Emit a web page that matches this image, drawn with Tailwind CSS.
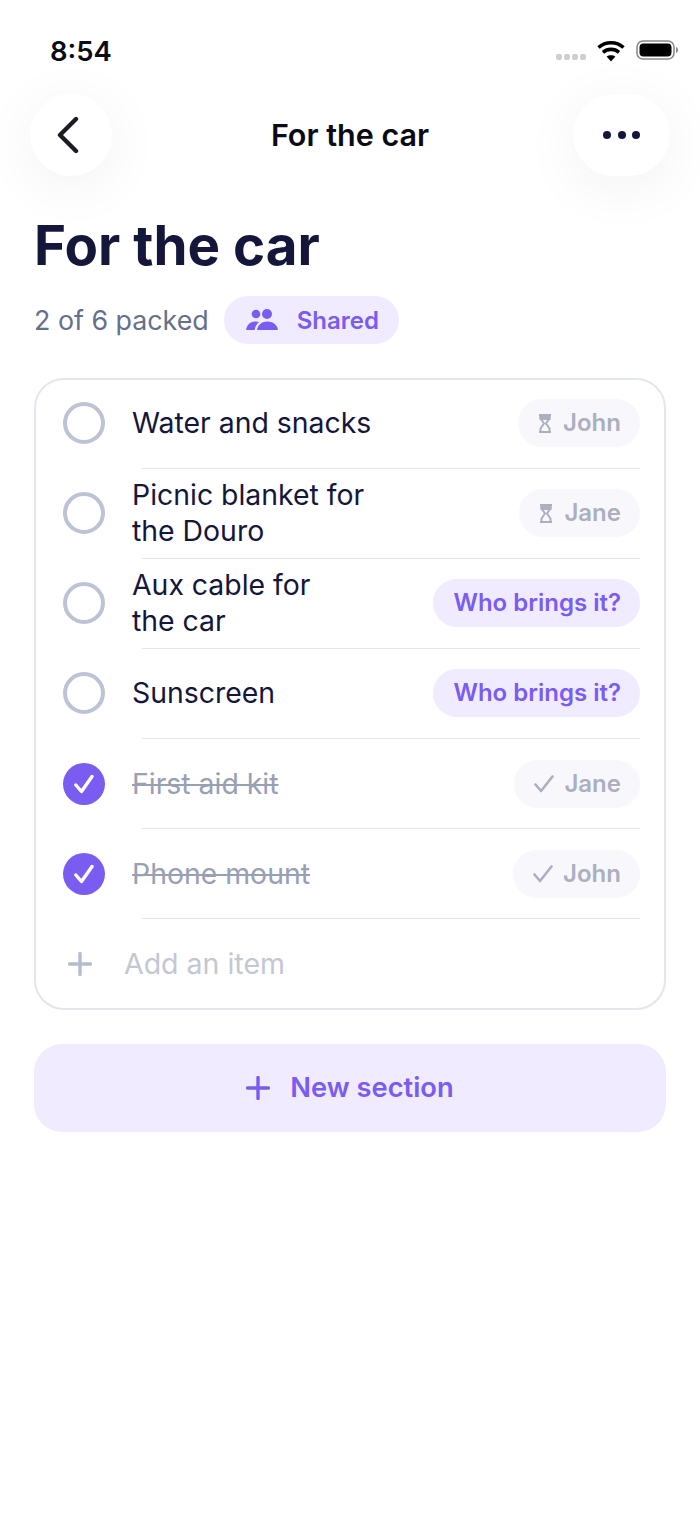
<!DOCTYPE html>
<html lang="en">
<head>
<meta charset="UTF-8">
<title>For the car</title>
<script src="https://cdn.jsdelivr.net/npm/@tailwindcss/browser@4"></script>
</head>
<body class="bg-white font-['Inter',sans-serif]">
<div class="w-[700px] h-[1517px] overflow-hidden bg-white">

  <!-- Status bar -->
  <div class="h-[94px] pt-[32px] pl-[50px] pr-[21px] flex justify-between items-start">
    <span class="text-[27.4px] leading-[38px] font-semibold text-[#0b0b12]">8:54</span>
    <div class="flex items-start pt-[8px]">
      <div class="flex gap-[2px] mt-[14px] mr-[11px]">
        <span class="w-[6px] h-[6px] rounded-[2px] bg-[#cfcfd2]"></span>
        <span class="w-[6px] h-[6px] rounded-[2px] bg-[#cfcfd2]"></span>
        <span class="w-[6px] h-[6px] rounded-[2px] bg-[#cfcfd2]"></span>
        <span class="w-[6px] h-[6px] rounded-[2px] bg-[#cfcfd2]"></span>
      </div>
      <svg width="28" height="22" viewBox="0 0 28 22" class="mr-[11px]" fill="none" stroke="#000" stroke-width="3.6">
        <path d="M1.5 7.5C8.5 1.2 19.5 1.2 26.5 7.5"/>
        <path d="M6 12.3C10.5 8.4 17.5 8.4 22 12.3"/>
        <path d="M14 21.5L9.6 16.6C12 14.7 16 14.7 18.4 16.6Z" fill="#000" stroke="none"/>
      </svg>
      <svg width="43" height="20" viewBox="0 0 43 20" fill="none">
        <rect x="1" y="1" width="37" height="18" rx="6" stroke="#8a8a8a" stroke-width="1.6"/>
        <rect x="3.5" y="3.5" width="32" height="13" rx="4" fill="#000"/>
        <path d="M40 7C41.5 7.5 42 8.700 42 10C42 11.300 41.500 12.500 40 13Z" fill="#8a8a8a"/>
      </svg>
    </div>
  </div>

  <!-- Nav -->
  <div class="relative h-[82px] pl-[30px] pr-[30px] flex justify-between items-center">
    <button class="w-[82px] h-[82px] rounded-full bg-white shadow-[0_10px_60px_rgba(30,30,70,0.06)] flex items-center justify-center">
      <svg width="24" height="38" viewBox="0 0 24 38" fill="none" stroke="#1c1c24" stroke-width="4.400" stroke-linecap="round" stroke-linejoin="round" class="-ml-[6px]">
        <path d="M20 3L4 19L20 35"/>
      </svg>
    </button>
    <span class="absolute inset-x-0 text-center text-[30.500px] leading-[38px] font-semibold text-[#0b0b16]">For the car</span>
    <button class="w-[97px] h-[82px] rounded-[41px] bg-white shadow-[0_10px_60px_rgba(30,30,70,0.06)] flex items-center justify-center gap-[6.500px]">
      <span class="w-[8px] h-[8px] rounded-full bg-[#14163a]"></span>
      <span class="w-[8px] h-[8px] rounded-full bg-[#14163a]"></span>
      <span class="w-[8px] h-[8px] rounded-full bg-[#14163a]"></span>
    </button>
  </div>

  <div class="px-[34px]">
    <h1 class="mt-[34px] text-[54.700px] leading-[70px] font-bold text-[#14163a]">For the car</h1>

    <div class="mt-[16px] flex items-center gap-[15px] h-[48px]">
      <span class="pt-[1px] text-[26.800px] text-[#66708a]">2 of 6 packed</span>
      <span class="h-[48px] w-[175px] rounded-full bg-[#f0ebfe] flex items-center pl-[22px] gap-[19px]">
        <svg width="32" height="22" viewBox="0 0 32 22" fill="#7a5cf0">
          <circle cx="10" cy="5" r="4.300"/>
          <circle cx="21" cy="5" r="5"/>
          <path d="M0 21C1 15 5 12.500 10 12.500C11 12.500 12 12.700 13 13.100C10.500 15.500 9 18 8.700 21Z"/>
          <path d="M11 21C12 15.500 16 12.500 21.500 12.500C27 12.500 31 15.500 32 21Z"/>
        </svg>
        <span class="pt-[1px] text-[24px] font-semibold text-[#7a5cf0]">Shared</span>
      </span>
    </div>

    <!-- Checklist card -->
    <div class="mt-[34px] h-[632px] rounded-[30px] border-2 border-[#e4e6ee] bg-white">
      <div class="-mt-[1.500px]">

        <div class="h-[89.14px] flex items-center pl-[27px] pr-[24px]">
          <span class="w-[42px] h-[42px] rounded-full border-4 border-[#bcc3d4]"></span>
          <span class="ml-[27px] flex-1 text-[28.400px] leading-[36px] text-[#14163a]">Water and snacks</span>
          <span class="h-[48px] pl-[20px] pr-[19px] rounded-full bg-[#f8f8fc] flex items-center gap-[11px] text-[24px] font-semibold text-[#abafc0]">
            <svg width="14" height="19" viewBox="0 0 14 19" fill="none" stroke="#abafc0" stroke-width="2"><path d="M1 1H13M1 18H13M2.500 1V4.500L6 9.500L2.500 14.500V18M11.500 1V4.500L8 9.500L11.500 14.500V18"/><path d="M2.500 1H11.500V5H2.500Z" fill="#abafc0"/></svg>
            John
          </span>
        </div>
        <div class="h-px ml-[106px] mr-[24px] bg-[#e4e6ee]"></div>

        <div class="h-[89.14px] flex items-center pl-[27px] pr-[24px]">
          <span class="w-[42px] h-[42px] rounded-full border-4 border-[#bcc3d4]"></span>
          <span class="ml-[27px] flex-1 text-[28.400px] leading-[36px] text-[#14163a]">Picnic blanket for<br>the Douro</span>
          <span class="h-[48px] pl-[20px] pr-[19px] rounded-full bg-[#f8f8fc] flex items-center gap-[11px] text-[24px] font-semibold text-[#abafc0]">
            <svg width="14" height="19" viewBox="0 0 14 19" fill="none" stroke="#abafc0" stroke-width="2"><path d="M1 1H13M1 18H13M2.500 1V4.500L6 9.500L2.500 14.500V18M11.500 1V4.500L8 9.500L11.500 14.500V18"/><path d="M2.500 1H11.500V5H2.500Z" fill="#abafc0"/></svg>
            Jane
          </span>
        </div>
        <div class="h-px ml-[106px] mr-[24px] bg-[#e4e6ee]"></div>

        <div class="h-[89.14px] flex items-center pl-[27px] pr-[24px]">
          <span class="w-[42px] h-[42px] rounded-full border-4 border-[#bcc3d4]"></span>
          <span class="ml-[27px] flex-1 text-[28.400px] leading-[36px] text-[#14163a]">Aux cable for<br>the car</span>
          <span class="h-[48px] pl-[20px] pr-[19px] rounded-full bg-[#f0ebfe] flex items-center text-[24px] font-semibold text-[#7a5cf0]">Who brings it?</span>
        </div>
        <div class="h-px ml-[106px] mr-[24px] bg-[#e4e6ee]"></div>

        <div class="h-[89.14px] flex items-center pl-[27px] pr-[24px]">
          <span class="w-[42px] h-[42px] rounded-full border-4 border-[#bcc3d4]"></span>
          <span class="ml-[27px] flex-1 text-[28.400px] leading-[36px] text-[#14163a]">Sunscreen</span>
          <span class="h-[48px] pl-[20px] pr-[19px] rounded-full bg-[#f0ebfe] flex items-center text-[24px] font-semibold text-[#7a5cf0]">Who brings it?</span>
        </div>
        <div class="h-px ml-[106px] mr-[24px] bg-[#e4e6ee]"></div>

        <div class="h-[89.14px] flex items-center pl-[27px] pr-[24px]">
          <span class="w-[42px] h-[42px] rounded-full bg-[#7a5cf0] flex items-center justify-center">
            <svg width="20" height="20" viewBox="0 0 20 20" fill="none" stroke="#fff" stroke-width="3.400" stroke-linecap="round" stroke-linejoin="round"><path d="M1.800 11L7.500 17.500L18 2.500"/></svg>
          </span>
          <span class="ml-[27px] flex-1 text-[28.400px] leading-[36px] text-[#98a0b4] line-through decoration-2">First aid kit</span>
          <span class="h-[48px] pl-[20px] pr-[19px] rounded-full bg-[#f8f8fc] flex items-center gap-[10px] text-[24px] font-semibold text-[#abafc0]">
            <svg width="20" height="18" viewBox="0 0 20 18" fill="none" stroke="#abafc0" stroke-width="2.600" stroke-linecap="round" stroke-linejoin="round"><path d="M1.500 9.500L7 16L18.500 1.500"/></svg>
            Jane
          </span>
        </div>
        <div class="h-px ml-[106px] mr-[24px] bg-[#e4e6ee]"></div>

        <div class="h-[89.14px] flex items-center pl-[27px] pr-[24px]">
          <span class="w-[42px] h-[42px] rounded-full bg-[#7a5cf0] flex items-center justify-center">
            <svg width="20" height="20" viewBox="0 0 20 20" fill="none" stroke="#fff" stroke-width="3.400" stroke-linecap="round" stroke-linejoin="round"><path d="M1.800 11L7.500 17.500L18 2.500"/></svg>
          </span>
          <span class="ml-[27px] flex-1 text-[28.400px] leading-[36px] text-[#98a0b4] line-through decoration-2">Phone mount</span>
          <span class="h-[48px] pl-[20px] pr-[19px] rounded-full bg-[#f8f8fc] flex items-center gap-[10px] text-[24px] font-semibold text-[#abafc0]">
            <svg width="20" height="18" viewBox="0 0 20 18" fill="none" stroke="#abafc0" stroke-width="2.600" stroke-linecap="round" stroke-linejoin="round"><path d="M1.500 9.500L7 16L18.500 1.500"/></svg>
            John
          </span>
        </div>
        <div class="h-px ml-[106px] mr-[24px] bg-[#e4e6ee]"></div>

        <div class="h-[90.14px] flex items-center pl-[32px]">
          <svg width="24" height="24" viewBox="0 0 24 24" fill="none" stroke="#b6bccd" stroke-width="3.400" stroke-linecap="round"><path d="M12 1.500V22.500M1.500 12H22.500"/></svg>
          <span class="ml-[32px] text-[28.500px] text-[#c4c7d2]">Add an item</span>
        </div>
      </div>
    </div>

    <button class="mt-[34px] w-full h-[88px] rounded-[28px] bg-[#f0ebfe] flex items-center justify-center gap-[20px] text-[27.300px] font-semibold text-[#7a5cf0]">
      <svg width="24" height="24" viewBox="0 0 24 24" fill="none" stroke="#7a5cf0" stroke-width="3.400" stroke-linecap="round"><path d="M12 1.500V22.500M1.500 12H22.500"/></svg>
      New section
    </button>
  </div>
</div>
</body>
</html>
